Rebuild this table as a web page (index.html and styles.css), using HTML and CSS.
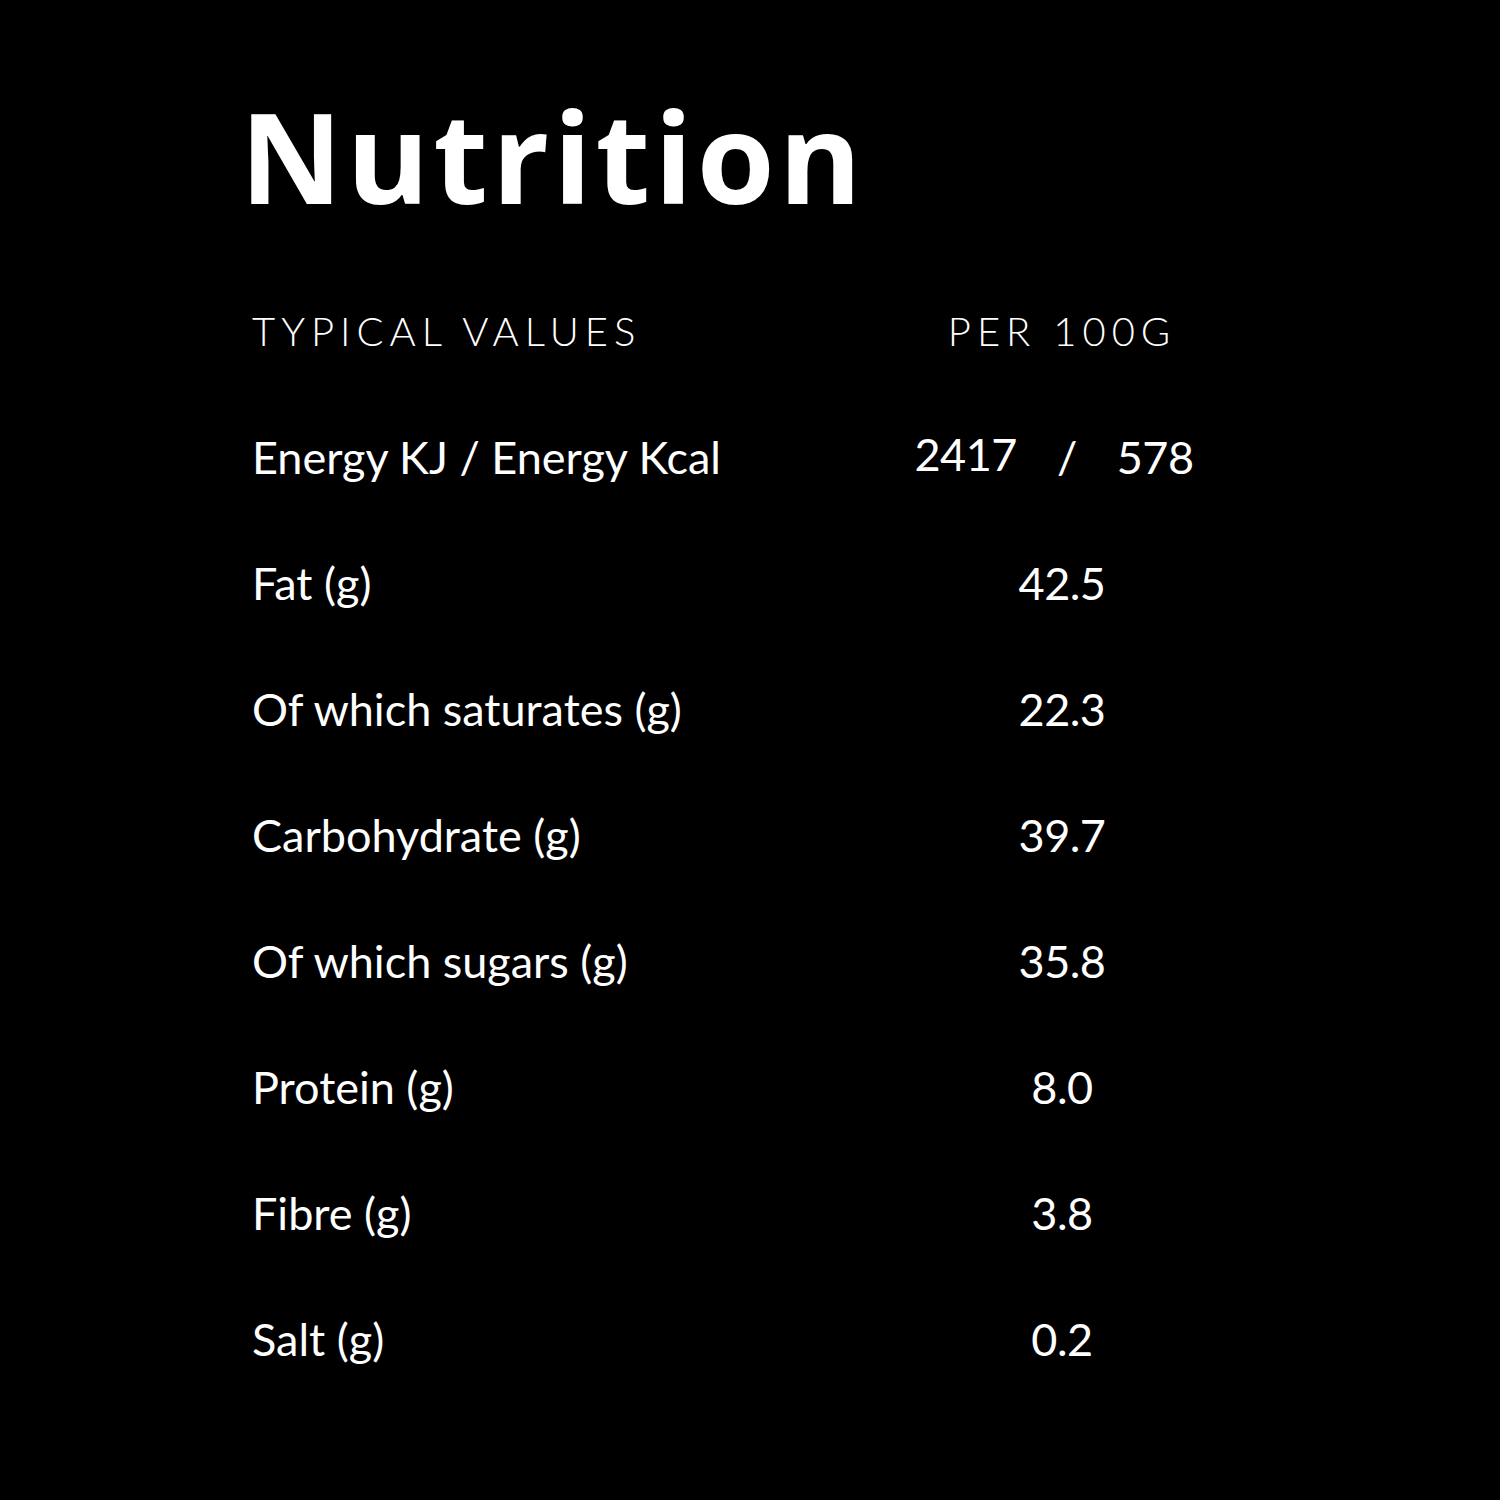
FILE: index.html
```html
<!DOCTYPE html>
<html>
<head>
<meta charset="utf-8">
<link rel="stylesheet" href="styles.css">
</head>
<body>
<main class="panel">
  <h1 class="title">Nutrition</h1>
  <div class="table">
    <div class="head label-col">TYPICAL VALUES</div>
    <div class="head value-col">PER 100G</div>

    <div class="label">Energy KJ / Energy Kcal</div>
    <div class="value energy"><span class="kj">2417</span><span class="slash">/</span><span class="kcal">578</span></div>

    <div class="label">Fat (g)</div>
    <div class="value">42.5</div>

    <div class="label">Of which saturates (g)</div>
    <div class="value">22.3</div>

    <div class="label">Carbohydrate (g)</div>
    <div class="value">39.7</div>

    <div class="label">Of which sugars (g)</div>
    <div class="value">35.8</div>

    <div class="label">Protein (g)</div>
    <div class="value">8.0</div>

    <div class="label">Fibre (g)</div>
    <div class="value">3.8</div>

    <div class="label">Salt (g)</div>
    <div class="value">0.2</div>
  </div>
</main>
</body>
</html>
```
FILE: styles.css
```css
html, body {
  margin: 0;
  padding: 0;
  background: #000;
}
.panel {
  width: 1500px;
  height: 1500px;
  background: #000;
  color: #fff;
  box-sizing: border-box;
  padding: 92px 0 0 240px;
}
.title {
  margin: 0;
  font-family: "Open Sans", sans-serif;
  font-weight: 700;
  font-size: 126px;
  line-height: 126px;
  letter-spacing: 4px;
}
.table {
  display: grid;
  grid-template-columns: 600px 420px;
  grid-auto-rows: 126px;
  margin-top: 50px;
  padding-left: 12px;
  font-family: "Lato", sans-serif;
  align-items: center;
}
.head {
  font-weight: 300;
  font-size: 40px;
  letter-spacing: 6px;
}
.label {
  font-size: 45px;
  letter-spacing: 0;
}
.value {
  font-size: 45px;
  text-align: center;
  letter-spacing: -0.5px;
}
.value-col {
  text-align: center;
}
.energy {
  display: flex;
  justify-content: center;
  gap: 40px;
  margin-right: 16px;
}
.kj {
  position: relative;
  top: -3px;
}
```
